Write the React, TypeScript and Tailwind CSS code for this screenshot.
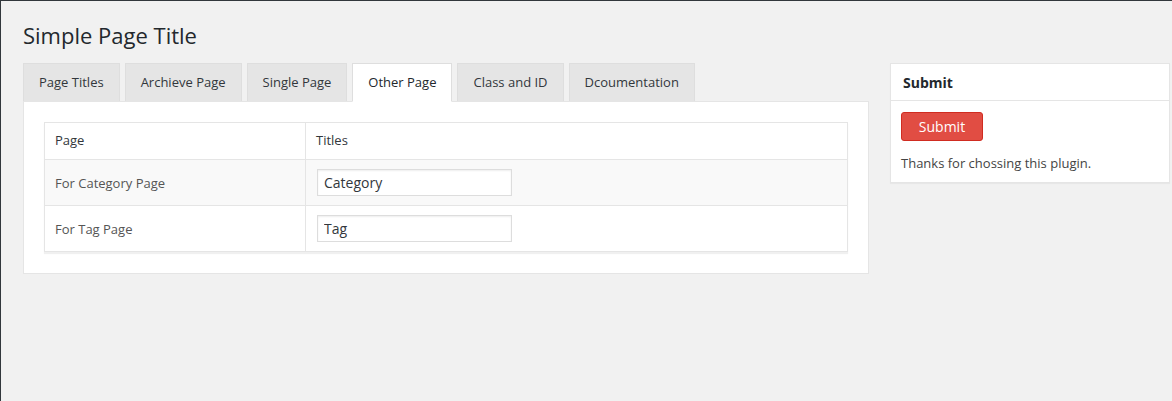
import React from 'react';

const tabs = ['Page Titles', 'Archieve Page', 'Single Page', 'Other Page', 'Class and ID', 'Dcoumentation'];
const activeTab = 'Other Page';

const rows = [
  { label: 'For Category Page', value: 'Category', striped: true },
  { label: 'For Tag Page', value: 'Tag', striped: false },
];

const TabNav: React.FC = () => (
  <div className="flex gap-[5px] h-[38px]">
    {tabs.map((tab) => (
      <div
        key={tab}
        className={
          tab === activeTab
            ? 'relative z-10 -mb-px flex items-center px-[15px] border border-[#dedede] border-b-white bg-white text-[13px] text-[#23282d]'
            : 'flex items-center px-[15px] border border-b-0 border-[#dedede] bg-[#e5e5e5] text-[13px] text-[#32373c]'
        }
      >
        {tab}
      </div>
    ))}
  </div>
);

const TitlesTable: React.FC = () => (
  <div className="border border-[#e5e5e5] shadow-[0_2px_1px_rgba(0,0,0,0.06)]">
    <div className="flex h-[37px] border-b border-[#e5e5e5] text-[13px] text-[#32373c]">
      <div className="w-[261px] flex items-center pl-[10px] border-r border-[#e5e5e5]">Page</div>
      <div className="flex-1 flex items-center pl-[10px]">Titles</div>
    </div>
    {rows.map((row, i) => (
      <div
        key={row.label}
        className={`flex text-[13px] ${row.striped ? 'bg-[#f9f9f9]' : 'bg-white'} ${
          i < rows.length - 1 ? 'h-[46px] border-b border-[#e5e5e5]' : 'h-[45px]'
        }`}
      >
        <div className="w-[261px] flex items-center pl-[10px] pt-[2px] border-r border-[#e5e5e5] text-[#555]">{row.label}</div>
        <div className="flex-1 flex items-center pl-[11px]">
          <input
            defaultValue={row.value}
            className="w-[195px] h-[27px] px-[6px] border border-[#ddd] bg-white text-[14px] text-[#32373c] shadow-[inset_0_1px_2px_rgba(0,0,0,0.07)] outline-none"
          />
        </div>
      </div>
    ))}
  </div>
);

const SubmitBox: React.FC = () => (
  <div className="w-[280px] border border-[#e5e5e5] bg-white shadow-[0_1px_1px_rgba(0,0,0,0.04)]">
    <div className="h-[37px] flex items-center px-[12px] border-b border-[#e5e5e5] text-[14px] font-bold text-[#23282d]">
      Submit
    </div>
    <div className="px-[10px] pt-[11px] pb-[8px]">
      <button className="w-[82px] h-[29px] rounded-[3px] border border-[#d02c21] bg-[#e14d43] text-[14px] text-white">
        Submit
      </button>
      <p className="mt-[13px] text-[13px] text-[#444]">Thanks for chossing this plugin.</p>
    </div>
  </div>
);

export default function App() {
  return (
    <div
      className="h-[401px] border-l border-t border-[#32373c] bg-[#f1f1f1] pl-[22px] pt-[20px]"
      style={{ fontFamily: '"Open Sans", "Noto Sans", sans-serif' }}
    >
      <h1 className="h-[42px] text-[22px] font-normal leading-[29px] text-[#23282d]">Simple Page Title</h1>
      <div className="flex items-start gap-[21px]">
        <div className="w-[846px]">
          <TabNav />
          <div className="border border-[#e5e5e5] bg-white p-[20px] pb-[21px]">
            <TitlesTable />
          </div>
        </div>
        <SubmitBox />
      </div>
    </div>
  );
}
